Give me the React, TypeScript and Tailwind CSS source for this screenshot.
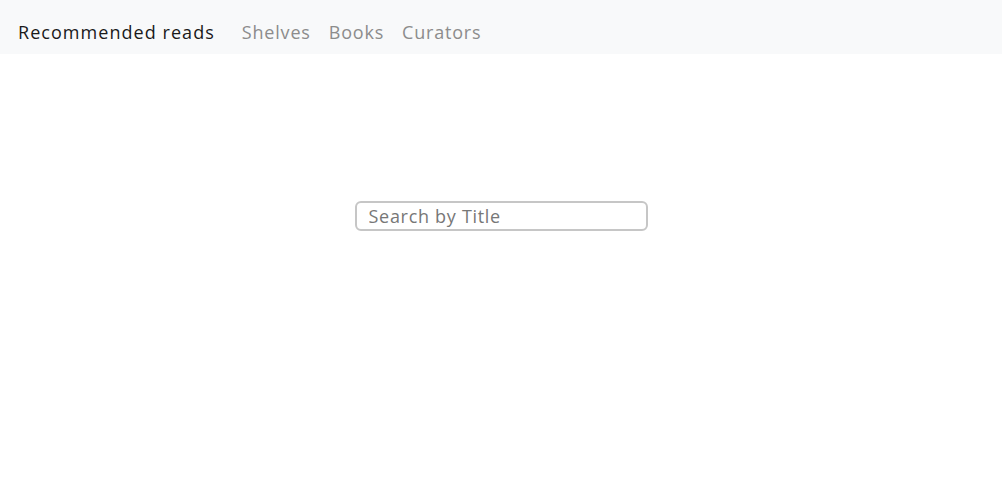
export default function App() {
  return (
    <div className="min-h-[480px] w-full bg-white" style={{ fontFamily: '"Open Sans", sans-serif' }}>
      <nav className="flex h-[54px] items-center bg-[#f8f9fa] pl-[18px] pt-[10px]">
        <span className="text-[18px] leading-none tracking-[1.05px] text-[#1a1a1a]">Recommended reads</span>
        <div className="ml-[27px] flex gap-[18px] text-[18px] leading-none tracking-[0.8px] text-[#8c8c8c]">
          <span>Shelves</span>
          <span>Books</span>
          <span>Curators</span>
        </div>
      </nav>
      <div className="flex justify-center pt-[147px]">
        <input
          type="text"
          placeholder="Search by Title"
          className="h-[30px] w-[293px] rounded-[6px] border-2 border-[#c6c6c6] px-[12px] text-[18px] tracking-[0.7px] text-[#333] outline-none placeholder:text-[#777]"
          style={{ fontFamily: '"Open Sans", sans-serif' }}
        />
      </div>
    </div>
  );
}
